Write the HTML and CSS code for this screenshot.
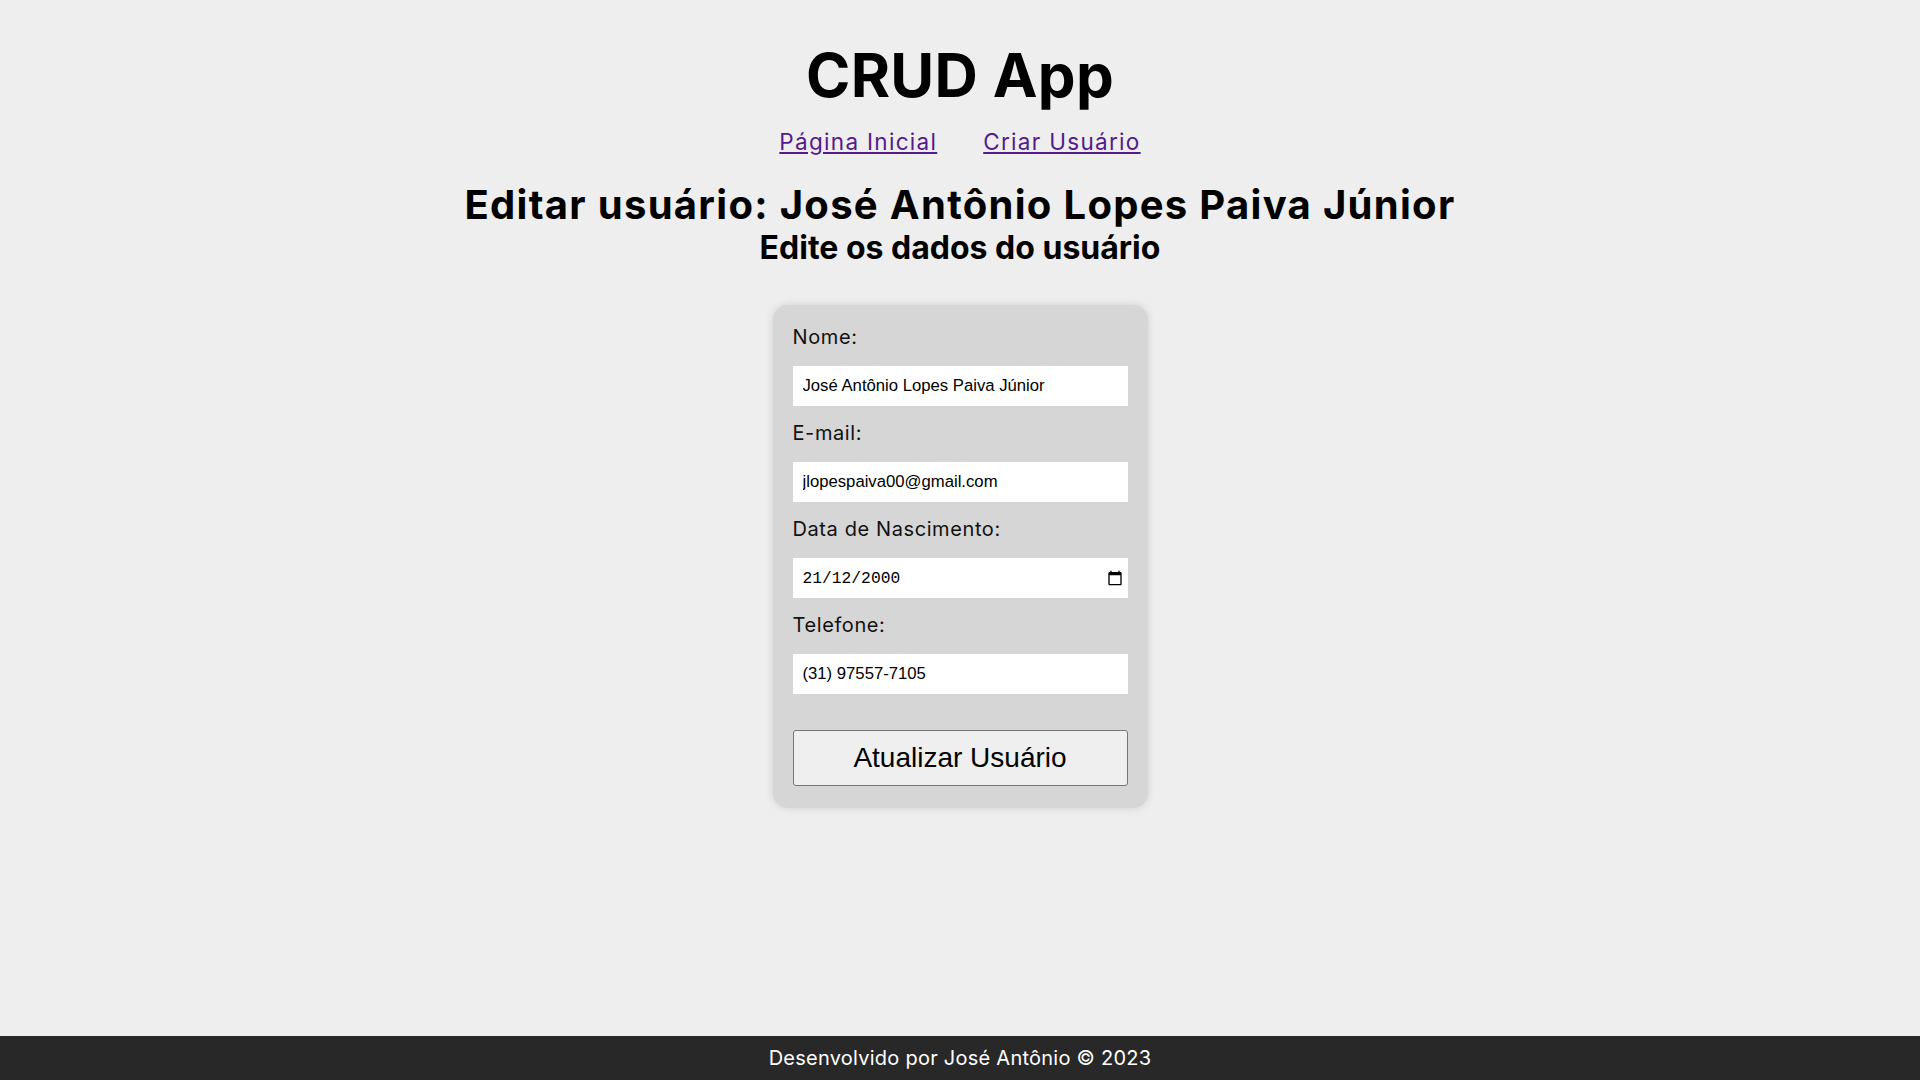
FILE: index.html
```html
<!DOCTYPE html>
<html lang="pt-BR">
<head>
<meta charset="utf-8">
<title>CRUD App</title>
<link rel="stylesheet" href="styles.css">
</head>
<body>
<header class="header">
  <h1 class="title">CRUD App</h1>
  <nav class="nav">
    <a class="nav-link" href="#">Página Inicial</a>
    <a class="nav-link" href="#">Criar Usuário</a>
  </nav>
</header>
<main class="main">
  <h2 class="page-title">Editar usuário: José Antônio Lopes Paiva Júnior</h2>
  <h3 class="page-subtitle">Edite os dados do usuário</h3>
  <form class="card">
    <div class="field">
      <label class="label" for="nome">Nome:</label>
      <input class="input" id="nome" type="text" value="José Antônio Lopes Paiva Júnior">
    </div>
    <div class="field">
      <label class="label" for="email">E-mail:</label>
      <input class="input" id="email" type="text" value="jlopespaiva00@gmail.com">
    </div>
    <div class="field">
      <label class="label" for="nasc">Data de Nascimento:</label>
      <div class="date-box">
        <input class="date-input" id="nasc" type="text" value="21/12/2000">
        <svg class="cal-icon" viewBox="0 0 24 24" width="16" height="16" aria-hidden="true"><path d="M20 3h-1V1h-2v2H7V1H5v2H4c-1.1 0-2 .9-2 2v16c0 1.1.9 2 2 2h16c1.1 0 2-.9 2-2V5c0-1.1-.9-2-2-2zm0 18H4V8h16v13z" fill="#000"/></svg>
      </div>
    </div>
    <div class="field">
      <label class="label" for="tel">Telefone:</label>
      <input class="input" id="tel" type="text" value="(31) 97557-7105">
    </div>
    <button class="btn" type="button">Atualizar Usuário</button>
  </form>
</main>
<footer class="footer">Desenvolvido por José Antônio © 2023</footer>
</body>
</html>
```
FILE: styles.css
```css
* { box-sizing: border-box; }
html, body { margin: 0; padding: 0; }
body {
  background: #eeeeee;
  min-height: 100vh;
  display: flex;
  flex-direction: column;
  font-family: Inter, "Noto Sans", sans-serif;
  color: #000;
}
.header {
  display: flex;
  flex-direction: column;
  align-items: center;
  padding-top: 45px;
}
.title {
  margin: 0;
  font-size: 60px;
  line-height: 60px;
  font-weight: 700;
  letter-spacing: 0.3px;
}
.nav {
  display: flex;
  gap: 46px;
  margin-top: 26px;
}
.nav-link {
  font-size: 22.5px;
  line-height: 22px;
  letter-spacing: 1.3px;
  color: #551a8b;
  text-decoration: underline;
}
.main {
  display: flex;
  flex-direction: column;
  align-items: center;
}
.page-title {
  margin: 32px 0 0;
  font-size: 40px;
  line-height: 40px;
  font-weight: 700;
  letter-spacing: 1.3px;
}
.page-subtitle {
  margin: 7px 0 0;
  font-size: 32px;
  line-height: 32px;
  font-weight: 700;
}
.card {
  margin-top: 41px;
  width: 375px;
  padding: 20px 20px 22px;
  background: #d6d6d6;
  border-radius: 15px;
  box-shadow: 0 0 8px rgba(0,0,0,0.12);
  display: flex;
  flex-direction: column;
}
.field {
  display: flex;
  flex-direction: column;
  margin-bottom: 15px;
}
.label {
  font-size: 20px;
  line-height: 24px;
  letter-spacing: 0.6px;
  margin-bottom: 17px;
  color: #111;
}
.input {
  height: 40px;
  border: none;
  background: #fff;
  padding: 0 10px;
  font-family: "Liberation Sans", Arial, sans-serif;
  font-size: 16.7px;
  color: #000;
  outline: none;
}
.date-box {
  height: 40px;
  background: #fff;
  display: flex;
  align-items: center;
  padding: 0 5px 0 10px;
}
.date-input {
  flex: 1;
  min-width: 0;
  border: none;
  background: transparent;
  padding: 0;
  font-family: "Liberation Mono", monospace;
  font-size: 16.3px;
  color: #000;
  outline: none;
}
.cal-icon { display: block; flex: none; }
.btn {
  margin-top: 21px;
  height: 56px;
  background: #efefef;
  border: 1px solid #767676;
  border-radius: 3px;
  font-family: "Liberation Sans", Arial, sans-serif;
  font-size: 28px;
  color: #000;
  padding: 0;
}
.footer {
  margin-top: auto;
  height: 44px;
  background: #282828;
  color: #fff;
  display: flex;
  align-items: center;
  justify-content: center;
  font-size: 20px;
  letter-spacing: 0.25px;
}
```
